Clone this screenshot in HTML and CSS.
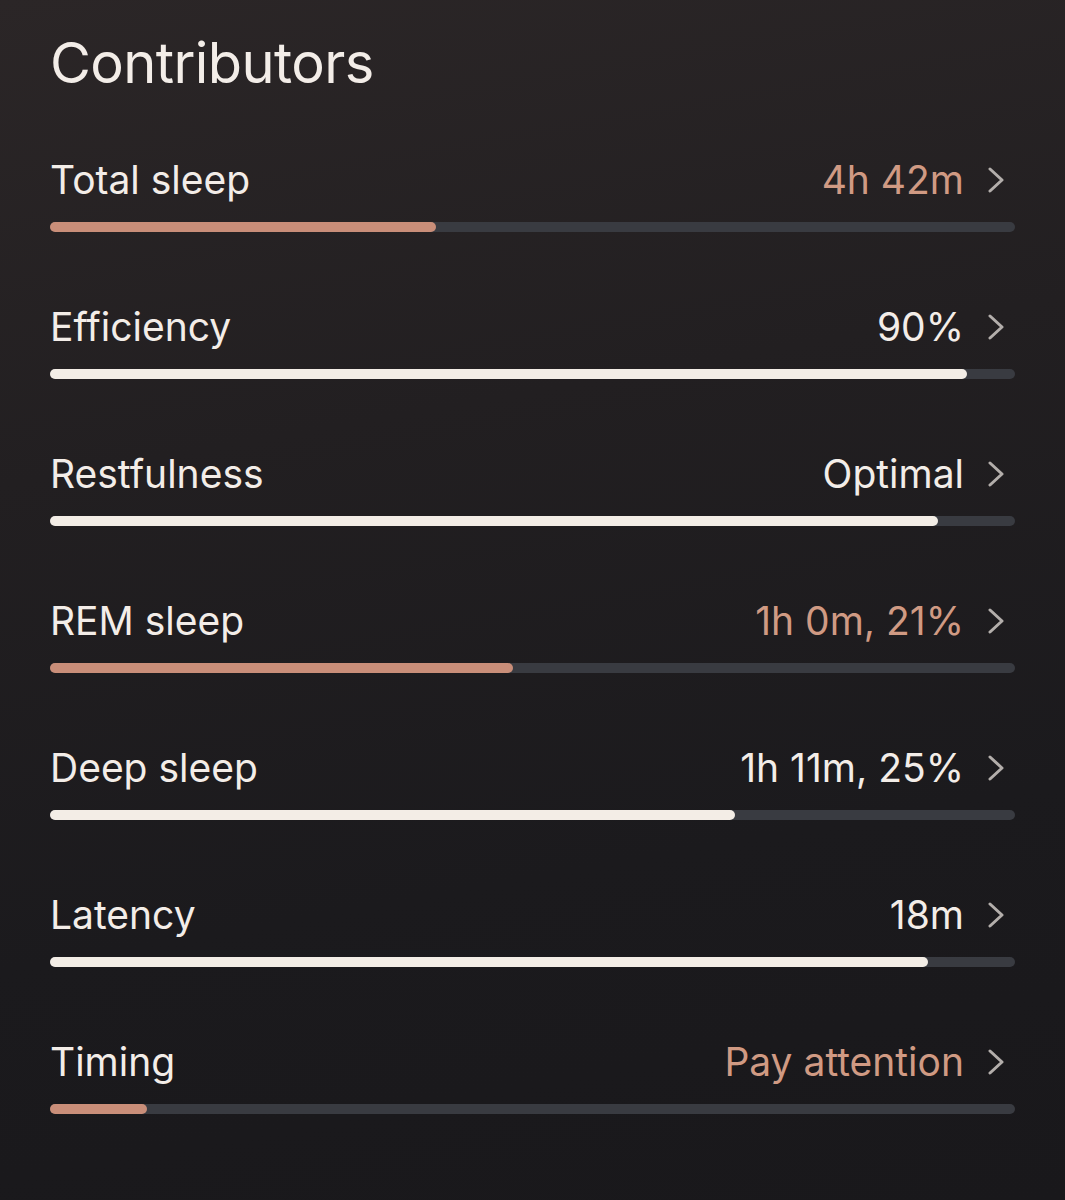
FILE: index.html
```html
<!DOCTYPE html>
<html lang="en">
<head>
    <meta charset="UTF-8">
    <meta name="viewport" content="width=device-width, initial-scale=1.0">
    <title>Contributors</title>
    <link rel="stylesheet" href="styles.css">
</head>
<body>
    <main class="panel">
        <h1>Contributors</h1>

        <div class="row">
            <div class="row-head">
                <span class="label">Total sleep</span>
                <span class="value warn">4h 42m</span>
                <svg class="chev" viewBox="0 0 16 26"><path d="M2 2 L14 13 L2 24"/></svg>
            </div>
            <div class="track"><div class="fill warn" style="width: 40%"></div></div>
        </div>

        <div class="row">
            <div class="row-head">
                <span class="label">Efficiency</span>
                <span class="value">90%</span>
                <svg class="chev" viewBox="0 0 16 26"><path d="M2 2 L14 13 L2 24"/></svg>
            </div>
            <div class="track"><div class="fill" style="width: 95%"></div></div>
        </div>

        <div class="row">
            <div class="row-head">
                <span class="label">Restfulness</span>
                <span class="value">Optimal</span>
                <svg class="chev" viewBox="0 0 16 26"><path d="M2 2 L14 13 L2 24"/></svg>
            </div>
            <div class="track"><div class="fill" style="width: 92%"></div></div>
        </div>

        <div class="row">
            <div class="row-head">
                <span class="label">REM sleep</span>
                <span class="value warn">1h 0m, 21%</span>
                <svg class="chev" viewBox="0 0 16 26"><path d="M2 2 L14 13 L2 24"/></svg>
            </div>
            <div class="track"><div class="fill warn" style="width: 48%"></div></div>
        </div>

        <div class="row">
            <div class="row-head">
                <span class="label">Deep sleep</span>
                <span class="value">1h 11m, 25%</span>
                <svg class="chev" viewBox="0 0 16 26"><path d="M2 2 L14 13 L2 24"/></svg>
            </div>
            <div class="track"><div class="fill" style="width: 71%"></div></div>
        </div>

        <div class="row">
            <div class="row-head">
                <span class="label">Latency</span>
                <span class="value">18m</span>
                <svg class="chev" viewBox="0 0 16 26"><path d="M2 2 L14 13 L2 24"/></svg>
            </div>
            <div class="track"><div class="fill" style="width: 91%"></div></div>
        </div>

        <div class="row">
            <div class="row-head">
                <span class="label">Timing</span>
                <span class="value warn">Pay attention</span>
                <svg class="chev" viewBox="0 0 16 26"><path d="M2 2 L14 13 L2 24"/></svg>
            </div>
            <div class="track"><div class="fill warn" style="width: 10%"></div></div>
        </div>
    </main>
</body>
</html>
```

FILE: styles.css
```css
html, body {
    margin: 0;
    min-height: 100%;
}
body {
    font-family: Inter, "Noto Sans", sans-serif;
    color: #f3ede8;
    background: linear-gradient(170deg, #2b2627 0%, #221f21 35%, #1b1a1d 70%, #19181b 100%);
    min-height: 1200px;
}
.panel {
    padding: 31px 50px 0;
}
h1 {
    margin: 0 0 61px;
    font-size: 56px;
    line-height: 64px;
    font-weight: 400;
    letter-spacing: -0.6px;
}
.row {
    margin-bottom: 71px;
}
.row-head {
    display: flex;
    align-items: center;
    height: 48px;
    margin-bottom: 18px;
}
.label {
    flex: 1;
    font-size: 39px;
    line-height: 48px;
}
.value {
    font-size: 39px;
    line-height: 48px;
}
.warn {
    color: #d09a83;
}
.chev {
    width: 16px;
    height: 26px;
    margin: 0 11px 0 24px;
}
.chev path {
    fill: none;
    stroke: #b3aeab;
    stroke-width: 3;
    stroke-linecap: round;
    stroke-linejoin: round;
}
.track {
    height: 10px;
    border-radius: 5px;
    background: #393b41;
}
.fill {
    height: 100%;
    border-radius: 5px;
    background: #f3ede6;
}
.fill.warn {
    background: #c98e79;
}
```
